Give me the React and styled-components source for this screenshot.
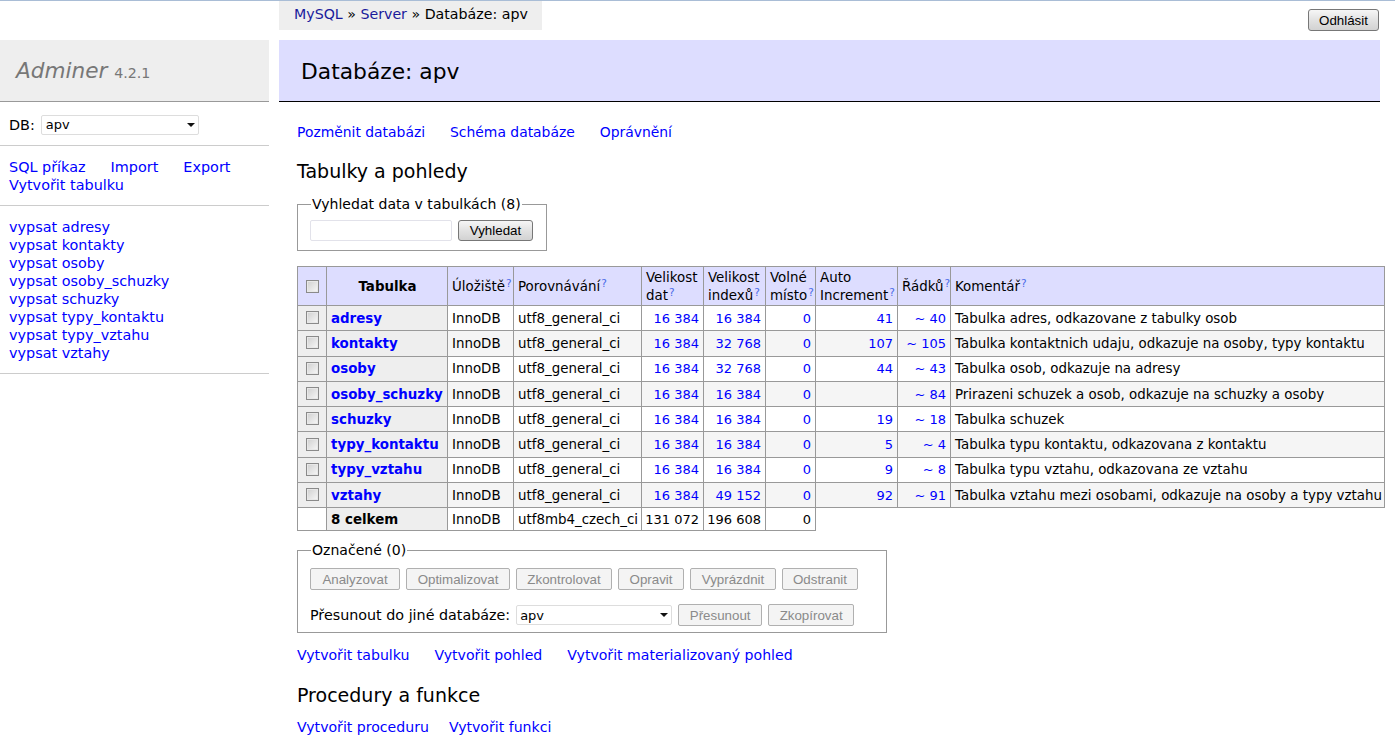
import React from "react";
import styled, { createGlobalStyle } from "styled-components";

const font = `"DejaVu Sans", Verdana, sans-serif`;

const tables = [
  ["adresy", "16 384", "16 384", "0", "41", "~ 40", "Tabulka adres, odkazovane z tabulky osob"],
  ["kontakty", "16 384", "32 768", "0", "107", "~ 105", "Tabulka kontaktnich udaju, odkazuje na osoby, typy kontaktu"],
  ["osoby", "16 384", "32 768", "0", "44", "~ 43", "Tabulka osob, odkazuje na adresy"],
  ["osoby_schuzky", "16 384", "16 384", "0", "", "~ 84", "Prirazeni schuzek a osob, odkazuje na schuzky a osoby"],
  ["schuzky", "16 384", "16 384", "0", "19", "~ 18", "Tabulka schuzek"],
  ["typy_kontaktu", "16 384", "16 384", "0", "5", "~ 4", "Tabulka typu kontaktu, odkazovana z kontaktu"],
  ["typy_vztahu", "16 384", "16 384", "0", "9", "~ 8", "Tabulka typu vztahu, odkazovana ze vztahu"],
  ["vztahy", "16 384", "49 152", "0", "92", "~ 91", "Tabulka vztahu mezi osobami, odkazuje na osoby a typy vztahu"],
];

const colWidths = [29, 121, 66, 128, 62, 62, 50, 82, 53, 434];

const actions = [
  ["Analyzovat", 90],
  ["Optimalizovat", 104],
  ["Zkontrolovat", 96],
  ["Opravit", 66],
  ["Vyprázdnit", 86],
  ["Odstranit", 76],
];

const nb = text => text.replace(/ /g, "\u00a0");

const Help = () => <HelpMark href="#">?</HelpMark>;

export default function App() {
  return (
    <>
      <GlobalStyle />
      <TopBar>
        <Breadcrumb>
          <a href="#">MySQL</a> » <a href="#">Server</a> » Databáze: apv
        </Breadcrumb>
        <TopButton>Odhlásit</TopButton>
      </TopBar>
      <Body>
        <Sidebar>
          <Logo>
            Adminer <small>4.2.1</small>
          </Logo>
          <DbRow>
            DB:
            <SelectWrap $width={158} $pad={4}>
              <select defaultValue="apv">
                <option>apv</option>
              </select>
            </SelectWrap>
          </DbRow>
          <SideLinks>
            <div>
              <a href="#">SQL příkaz</a>
              <a href="#">Import</a>
              <a href="#">Export</a>
            </div>
            <a href="#">Vytvořit tabulku</a>
          </SideLinks>
          <TableList>
            {tables.map(row => (
              <li key={row[0]}>
                <a href="#">vypsat {row[0]}</a>
              </li>
            ))}
          </TableList>
        </Sidebar>
        <Main>
          <Title>Databáze: apv</Title>
          <Content>
            <Links $top={21} $size={13.9}>
              <a href="#">Pozměnit databázi</a>
              <a href="#">Schéma databáze</a>
              <a href="#">Oprávnění</a>
            </Links>
            <Heading $top={18}>Tabulky a pohledy</Heading>
            <Box $width={250} $top={12} $bottom={9}>
              <legend>Vyhledat data v tabulkách (8)</legend>
              <SearchRow>
                <SearchInput />
                <SearchButton>Vyhledat</SearchButton>
              </SearchRow>
            </Box>
            <DataTable>
              <colgroup>
                {colWidths.map((w, i) => (
                  <col key={i} style={{ width: w }} />
                ))}
              </colgroup>
              <thead>
                <tr>
                  <HeadCell $center>
                    <Check />
                  </HeadCell>
                  <HeadCell $center>
                    <strong>Tabulka</strong>
                  </HeadCell>
                  <HeadCell>Úložiště<Help /></HeadCell>
                  <HeadCell>Porovnávání<Help /></HeadCell>
                  <HeadCell>Velikost dat<Help /></HeadCell>
                  <HeadCell>Velikost indexů<Help /></HeadCell>
                  <HeadCell>Volné místo<Help /></HeadCell>
                  <HeadCell>Auto Increment<Help /></HeadCell>
                  <HeadCell>Řádků<Help /></HeadCell>
                  <HeadCell>Komentář<Help /></HeadCell>
                </tr>
              </thead>
              <tbody>
                {tables.map((row, i) => (
                  <Row key={row[0]} $odd={i % 2 === 1}>
                    <NameCell $center>
                      <Check />
                    </NameCell>
                    <NameCell>
                      <TableLink href="#">{row[0]}</TableLink>
                    </NameCell>
                    <Cell>InnoDB</Cell>
                    <Cell>utf8_general_ci</Cell>
                    {row.slice(1, 6).map((value, j) => (
                      <Cell key={j} $num>
                        <a href="#">{nb(value)}</a>
                      </Cell>
                    ))}
                    <Cell>{row[6]}</Cell>
                  </Row>
                ))}
                <TotalRow>
                  <Cell />
                  <NameCell>
                    <strong>8 celkem</strong>
                  </NameCell>
                  <Cell>InnoDB</Cell>
                  <Cell>utf8mb4_czech_ci</Cell>
                  <Cell $num>{nb("131 072")}</Cell>
                  <Cell $num>{nb("196 608")}</Cell>
                  <Cell $num>0</Cell>
                </TotalRow>
              </tbody>
            </DataTable>
            <Box $width={590} $top={10} $bottom={6}>
              <legend>Označené (0)</legend>
              <ButtonRow>
                {actions.map(([label, width]) => (
                  <DisabledButton key={label} disabled $width={width}>
                    {label}
                  </DisabledButton>
                ))}
              </ButtonRow>
              <MoveRow>
                <MoveLabel>Přesunout do jiné databáze:</MoveLabel>
                <SelectWrap $width={156} $pad={3}>
                  <select defaultValue="apv">
                    <option>apv</option>
                  </select>
                </SelectWrap>
                <DisabledButton disabled $width={84}>Přesunout</DisabledButton>
                <DisabledButton disabled $width={86}>Zkopírovat</DisabledButton>
              </MoveRow>
            </Box>
            <Links $top={13} $size={14.1}>
              <a href="#">Vytvořit tabulku</a>
              <a href="#">Vytvořit pohled</a>
              <a href="#">Vytvořit materializovaný pohled</a>
            </Links>
            <Heading $top={19}>Procedury a funkce</Heading>
            <Links $top={11} $size={14.1} $gap={20}>
              <a href="#">Vytvořit proceduru</a>
              <a href="#">Vytvořit funkci</a>
            </Links>
          </Content>
        </Main>
      </Body>
    </>
  );
}

const GlobalStyle = createGlobalStyle`
  html, body {
    margin: 0;
    padding: 0;
    background: #fff;
    color: #000;
    font: 14.4px/18px ${font};
    overflow: hidden;
  }
  a {
    color: #00f;
    text-decoration: none;
  }
`;

const TopBar = styled.header`
  display: flex;
  justify-content: space-between;
  align-items: flex-start;
  height: 39px;
  padding: 0 16px 0 279px;
  border-top: 1px solid #a9bdd6;
`;

const Breadcrumb = styled.nav`
  width: 263px;
  height: 29px;
  box-sizing: border-box;
  padding: 4px 15px;
  background: #eee;
  font-size: 14.2px;
  white-space: nowrap;
  a {
    color: #1a1a9c;
  }
`;

const TopButton = styled.button`
  width: 71px;
  height: 22px;
  margin-top: 8px;
  padding: 0;
  border: 1px solid #777;
  border-radius: 3px;
  background: linear-gradient(#f6f6f6, #e2e2e2 50%, #d2d2d2);
  color: #000;
  font: 13.33px "Liberation Sans", Arial, sans-serif;
`;

const Body = styled.div`
  display: flex;
  align-items: flex-start;
`;

const Sidebar = styled.aside`
  flex: 0 0 269px;
`;

const Logo = styled.h1`
  margin: 0;
  height: 62px;
  box-sizing: border-box;
  padding: 19px 16px 0;
  background: #eee;
  border-bottom: 1px solid #999;
  color: #777;
  font: italic 400 21.6px/24px ${font};
  small {
    font-size: 14.2px;
    font-style: normal;
  }
`;

const DbRow = styled.div`
  display: flex;
  align-items: center;
  gap: 6px;
  height: 41px;
  padding: 2px 0 0 9px;
  border-bottom: 1px solid #ccc;
`;

const SelectWrap = styled.span`
  position: relative;
  display: inline-block;
  width: ${p => p.$width}px;
  height: 20px;
  select {
    appearance: none;
    width: 100%;
    height: 100%;
    box-sizing: border-box;
    padding: 0 0 0 ${p => p.$pad}px;
    border: 1px solid #ddd;
    border-radius: 2px;
    background: #fff;
    color: #000;
    font: 13px ${font};
  }
  &::after {
    content: "";
    position: absolute;
    right: 4px;
    top: 8px;
    border: 4px solid transparent;
    border-top: 4px solid #111;
    border-bottom: 0;
    pointer-events: none;
  }
`;

const SideLinks = styled.div`
  padding: 12px 9px 11px;
  border-bottom: 1px solid #ccc;
  div a {
    margin-right: 25px;
  }
`;

const TableList = styled.ul`
  list-style: none;
  margin: 0;
  padding: 12px 9px 11px;
  border-bottom: 1px solid #ccc;
`;

const Main = styled.main`
  flex: 0 0 1101px;
  min-width: 0;
  margin-left: 10px;
`;

const Title = styled.h2`
  margin: 0;
  height: 62px;
  box-sizing: border-box;
  padding: 19px 22px 0;
  background: #ddf;
  border-bottom: 1px solid #000;
  font: 400 21.8px/26px ${font};
`;

const Content = styled.div`
  padding-left: 18px;
`;

const Links = styled.p`
  display: flex;
  gap: ${p => p.$gap || 25}px;
  margin: ${p => p.$top}px 0 0;
  font-size: ${p => p.$size}px;
  white-space: nowrap;
`;

const Heading = styled.h3`
  margin: ${p => p.$top}px 0 0;
  font: 400 19px/24px ${font};
`;

const Box = styled.fieldset`
  width: ${p => p.$width}px;
  box-sizing: border-box;
  margin: ${p => p.$top}px 0 0;
  padding: 0 12px ${p => p.$bottom}px;
  border: 1px solid #999;
  font-size: 14.05px;
  legend {
    padding: 0 1px;
    margin-left: 1px;
  }
`;

const SearchRow = styled.div`
  display: flex;
  gap: 6px;
  margin-top: 7px;
`;

const SearchInput = styled.input`
  width: 142px;
  height: 21px;
  box-sizing: border-box;
  border: 1px solid #e2e2ea;
  border-radius: 2px;
`;

const SearchButton = styled(TopButton)`
  width: 75px;
  height: 21px;
  margin: 0;
`;

const DataTable = styled.table`
  table-layout: fixed;
  width: 1087px;
  margin-top: 15px;
  border-collapse: collapse;
  td, th {
    border: 1px solid #999;
    overflow: hidden;
  }
`;

const HeadCell = styled.th`
  height: 39px;
  box-sizing: border-box;
  padding: 2px 3px 0 4px;
  background: #ddf;
  font-weight: 400;
  font-size: 13.4px;
  line-height: 18px;
  text-align: ${p => (p.$center ? "center" : "left")};
  strong {
    font-weight: 700;
  }
`;

const HelpMark = styled.a`
  font-size: 10.5px;
  line-height: 1;
  vertical-align: 4px;
  margin-left: 1px;
  color: #4a6ae8;
`;

const Row = styled.tr`
  height: 25.3px;
  background: ${p => (p.$odd ? "#f5f5f5" : "#fff")};
`;

const TotalRow = styled.tr`
  height: 23px;
`;

const Cell = styled.td`
  padding: ${p => (p.$num ? "1px 4px 0 2px" : "1px 3px 0 4px")};
  font-size: ${p => (p.$num ? 13 : 13.4)}px;
  white-space: nowrap;
  text-align: ${p => (p.$num ? "right" : "left")};
`;

const NameCell = styled(Cell)`
  background: #eee;
  text-align: ${p => (p.$center ? "center" : "left")};
  strong {
    font-weight: 700;
  }
`;

const TableLink = styled.a`
  font-weight: 700;
`;

const Check = styled.input.attrs({ type: "checkbox" })`
  appearance: none;
  display: block;
  width: 13px;
  height: 13px;
  margin: 0 auto 2px;
  box-sizing: border-box;
  border: 1px solid #8a8a8a;
  background: linear-gradient(135deg, #cfcfcf, #f8f8f8);
  box-shadow: inset 0 0 0 1px #e8e8e8;
`;

const ButtonRow = styled.div`
  display: flex;
  gap: 6px;
  margin-top: 9px;
`;

const DisabledButton = styled.button`
  width: ${p => p.$width}px;
  height: 22px;
  padding: 0;
  border: 1px solid #b0b0b0;
  border-radius: 2px;
  background: #f4f4f4;
  color: #8a8a8a;
  font: 13.33px "Liberation Sans", Arial, sans-serif;
`;

const MoveRow = styled.div`
  display: flex;
  align-items: center;
  gap: 6px;
  margin-top: 14px;
`;

const MoveLabel = styled.span`
  font-size: 14.3px;
`;
